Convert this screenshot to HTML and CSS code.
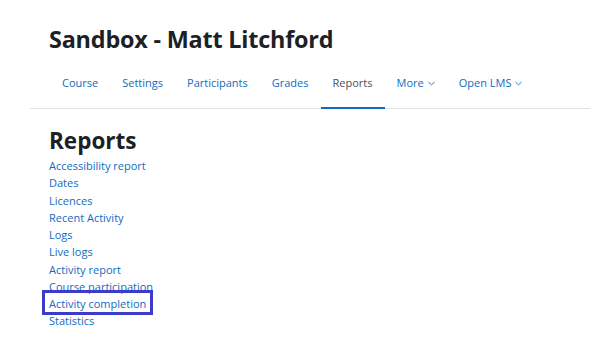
FILE: index.html
```html
<!DOCTYPE html>
<html>
<head>
<meta charset="utf-8">
<link rel="stylesheet" href="styles.css">
</head>
<body>
<div class="page">
  <header class="header">
    <h1 class="title">Sandbox - Matt Litchford</h1>
  </header>
  <nav class="nav">
    <a class="tab">Course</a>
    <a class="tab">Settings</a>
    <a class="tab">Participants</a>
    <a class="tab">Grades</a>
    <a class="tab active">Reports</a>
    <a class="tab">More<svg class="chev" viewBox="0 0 8 5" width="7" height="5"><path d="M0.5 0.8 L4 4 L7.5 0.8" fill="none" stroke="currentColor" stroke-width="1"/></svg></a>
    <a class="tab">Open LMS<svg class="chev" viewBox="0 0 8 5" width="7" height="5"><path d="M0.5 0.8 L4 4 L7.5 0.8" fill="none" stroke="currentColor" stroke-width="1"/></svg></a>
  </nav>
  <main class="content">
    <h2 class="heading">Reports</h2>
    <ul class="links">
      <li><a>Accessibility report</a></li>
      <li><a>Dates</a></li>
      <li><a>Licences</a></li>
      <li><a>Recent Activity</a></li>
      <li><a>Logs</a></li>
      <li><a>Live logs</a></li>
      <li><a>Activity report</a></li>
      <li><a>Course participation</a></li>
      <li><a class="highlight">Activity completion</a></li>
      <li><a>Statistics</a></li>
    </ul>
  </main>
</div>
</body>
</html>
```
FILE: styles.css
```css
html, body {
  margin: 0;
  padding: 0;
  background: #fff;
}
body {
  font-family: "Open Sans", "Liberation Sans", sans-serif;
  color: #1d2125;
}
.page {
  padding-left: 30px;
}
.header {
  padding: 23px 0 0 19px;
  height: 39px;
}
.title {
  margin: 0;
  font-size: 23.4px;
  font-weight: 700;
  line-height: 32px;
  letter-spacing: -0.2px;
}
.nav {
  display: flex;
  padding-left: 19px;
  border-bottom: 1px solid #dee2e6;
  height: 47px;
  padding-bottom: 4px;
  box-sizing: border-box;
}
.tab {
  display: flex;
  align-items: center;
  gap: 4px;
  padding: 0 12px;
  font-size: 11px;
  color: #0f6cbf;
  border-bottom: 2px solid transparent;
  margin-bottom: -5px;
  padding-bottom: 4px;
}
.tab:first-child {
  padding-left: 13px;
}
.tab.active {
  color: #495057;
  border-bottom-color: #0f6cbf;
}
.chev {
  margin-top: 1px;
}
.content {
  padding: 15px 0 0 19px;
}
.heading {
  margin: 0;
  font-size: 22.5px;
  font-weight: 700;
  line-height: 33px;
}
.links {
  list-style: none;
  margin: 0;
  padding: 0;
  font-size: 11px;
  line-height: 17.25px;
}
.links a {
  color: #0f6cbf;
}
.highlight {
  display: inline-block;
  padding: 2px 4px 0;
  margin: -2px 0 0 -4px;
  outline: 3px solid #3c3cc8;
  outline-offset: 0;
}
```
